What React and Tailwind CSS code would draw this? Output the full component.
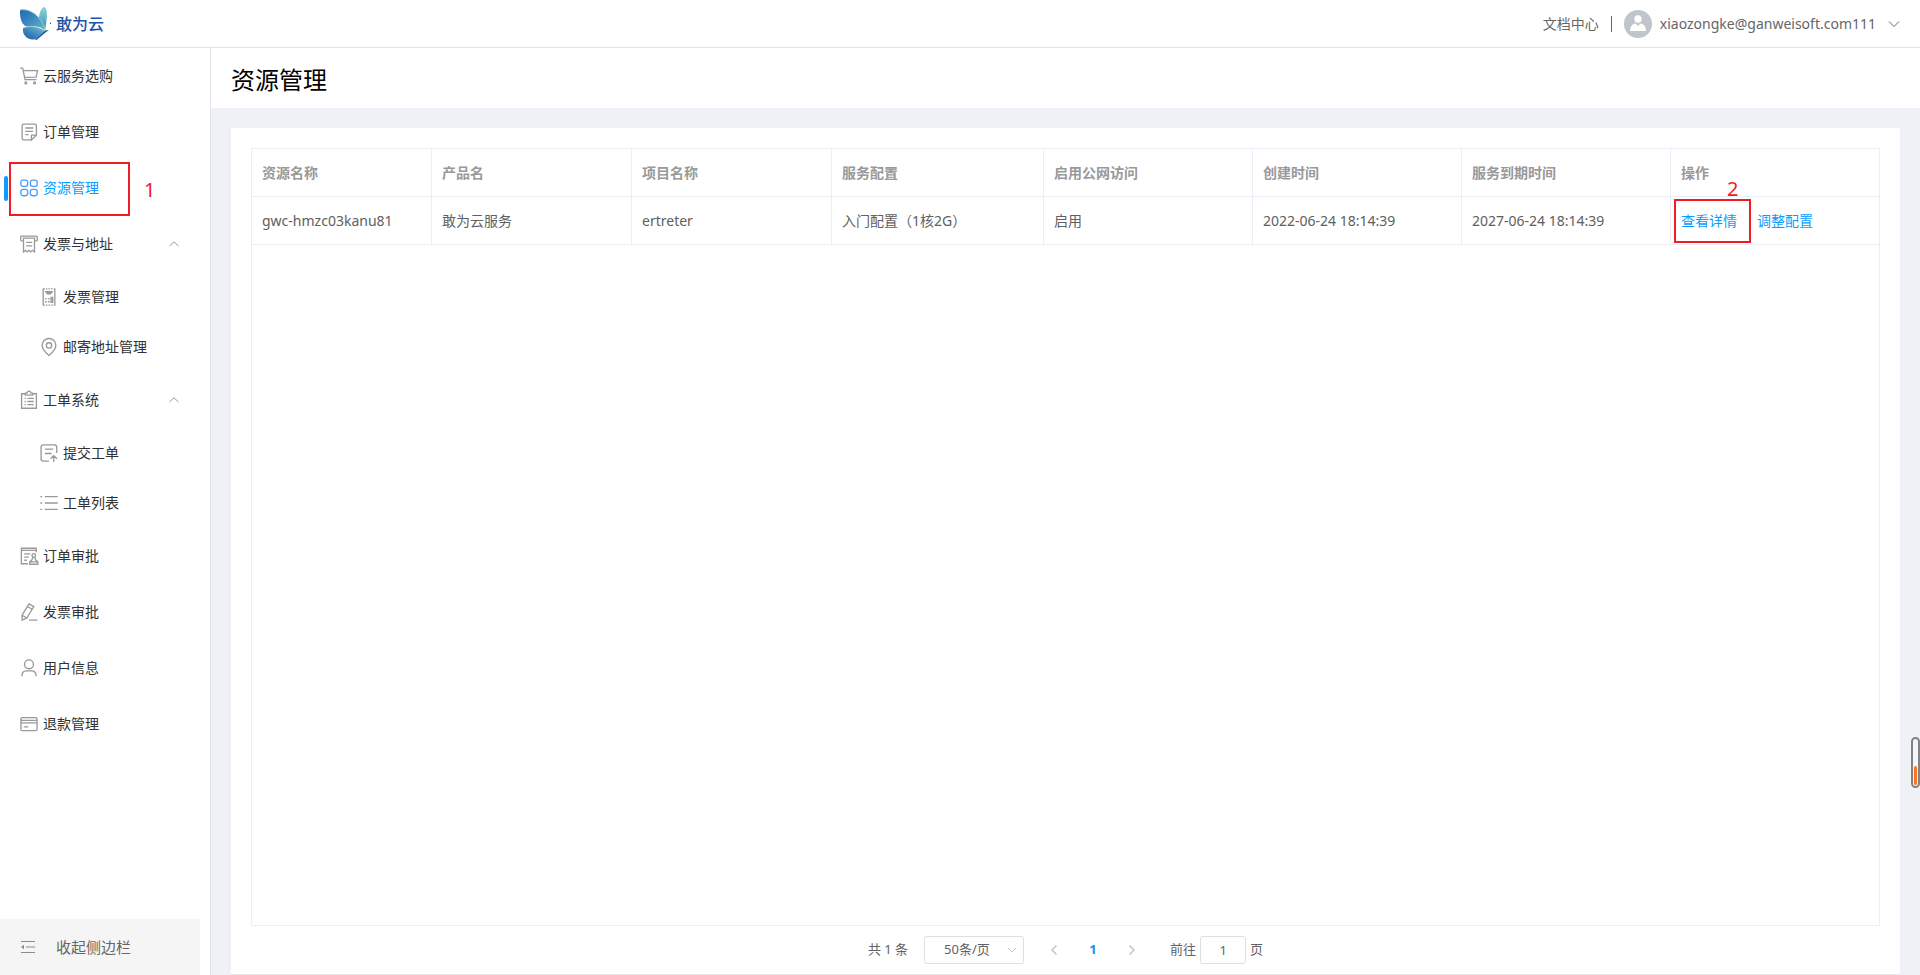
import { useState } from "react";
import clsx from "clsx";

const icons = {
  cart: (
    <>
      <path d="M.2 1h2.300l2.300 11h10.700M3 3.500h13.500l-1.300 6-10.800.3" />
      <circle cx="5.500" cy="15" r=".9" />
      <circle cx="13.800" cy="15" r=".9" />
    </>
  ),
  note: (
    <path d="M10.800 16H3.300c-.8 0-1.300-.5-1.300-1.300V2.300C2 1.500 2.500 1 3.300 1h10.900c.8 0 1.300.5 1.300 1.300v9.200L10.800 16v-4.500h4.500M5 4.700h7.500M5 7.900h7.500M5 11h3" />
  ),
  grid: (
    <>
      <rect x=".8" y="1" width="6.400" height="6" rx="2" />
      <rect x="9.800" y="1" width="6.400" height="6" rx="2" />
      <rect x=".8" y="9.800" width="6.400" height="6" rx="2" />
      <rect x="9.800" y="9.800" width="6.400" height="6" rx="2" />
    </>
  ),
  printer: (
    <path d="M3 5.500H1.500C1 5.500.7 5.200.7 4.700V1.800c0-.5.3-.8.8-.8h14c.5 0 .8.3.8.8v2.900c0 .5-.3.8-.8.8H14M2.800 3h11.600M3.300 3.500V16l2-1.500L7 16l1.600-1.500 1.500 1.500 1.700-1.500 1.900 1.500V3.500M5.800 7h5.700M5.800 10.300h5.700" />
  ),
  receipt: (
    <>
      <path d="M3 .5v16M14 .5v16" />
      <path d="M3 .9h11M3 16.200h11" strokeDasharray="1.500 1" />
      <path d="M5.500 3.500h6l-1.500 2h-3z" fill="currentColor" />
      <path d="M4.800 10.300h1.700M7.500 10.300h1.700M4.800 13h1.700M7.500 13h1.700" />
      <path d="M10.500 8.800H12v2.200h-1.500zM10.500 11.300H12v2.200h-1.500z" />
    </>
  ),
  pin: (
    <>
      <path d="M8.500 16.500C4.500 13 2 10.300 2 7a6.500 6.500 0 0 1 13 0c0 3.300-2.500 6-6.500 9.500z" />
      <circle cx="8.500" cy="7" r="2.500" />
    </>
  ),
  clipboard: (
    <>
      <path d="M5 2.600H1.500v13.700h14V2.600H12M5 3.900h7V2h-1.700a1.800 1.800 0 0 0-3.600 0H5z" />
      <path d="M4.300 7h1.200M7 7h6M4.300 9.900h1.200M7 9.900h6M4.300 12.800h1.200M7 12.800h6" />
    </>
  ),
  submit: (
    <path d="M15.800 8.500V3c0-1.500-.7-2.200-2.200-2.200H3.200C1.700.8 1 1.500 1 3v11c0 1.500.7 2.200 2.200 2.200h5.300M4.700 4.800h7.800M4.700 9h6.300M13 17v-5.800M10 14l3-3 3 3" />
  ),
  list: (
    <path d="M.3 2.500h1.700M4.500 2.500h12.300M.3 8.500h1.700M4.500 8.500h12.300M.3 14.500h1.700M4.500 14.500h12.300" />
  ),
  stamp: (
    <>
      <path d="M15.300 5V1.200H1.300v14.600h6.200M1.300 3.200h14M4 6.500h5.700M4 9.500h4.300M4 12.500h2.500" />
      <circle cx="13" cy="8" r="1.700" />
      <path d="M12.200 9.700 11 12.500l-1.800 1.300v2.500h7.600v-2.500L15 12.500l-1.200-2.800M9.200 14h7.600" />
    </>
  ),
  pencil: (
    <path d="M2 11.500 8.500.8l4.500 2.600L6.500 14.200 2 16.200zM7 3.300l4.500 2.600M2 11.600l4.500 2.600M8.500 16.200h8" />
  ),
  user: (
    <>
      <circle cx="8.500" cy="5" r="4.200" />
      <path d="M1.800 16.200c0-3.200 1.300-5 4.200-5h5c2.900 0 4.200 1.800 4.200 5" />
    </>
  ),
  card: (
    <path d="M2.100 2.500h12.800c.7 0 1.200.4 1.200 1.100v10c0 .7-.5 1.100-1.200 1.100H2.100c-.7 0-1.200-.4-1.200-1.100v-10c0-.7.5-1.100 1.200-1.100zM.9 5h15.200M.9 7.500h15.200M3.500 11.200h4.300" />
  ),
};

const menu = [
  { label: "云服务选购", icon: "cart" },
  { label: "订单管理", icon: "note" },
  { label: "资源管理", icon: "grid", active: true },
  {
    label: "发票与地址",
    icon: "printer",
    children: [
      { label: "发票管理", icon: "receipt" },
      { label: "邮寄地址管理", icon: "pin" },
    ],
  },
  {
    label: "工单系统",
    icon: "clipboard",
    children: [
      { label: "提交工单", icon: "submit" },
      { label: "工单列表", icon: "list" },
    ],
  },
  { label: "订单审批", icon: "stamp" },
  { label: "发票审批", icon: "pencil" },
  { label: "用户信息", icon: "user" },
  { label: "退款管理", icon: "card" },
];

const columns = [
  { title: "资源名称", width: "w-[180px]" },
  { title: "产品名", width: "w-[200px]" },
  { title: "项目名称", width: "w-[200px]" },
  { title: "服务配置", width: "w-[212px]" },
  { title: "启用公网访问", width: "w-[209px]" },
  { title: "创建时间", width: "w-[209px]" },
  { title: "服务到期时间", width: "w-[209px]" },
  { title: "操作" },
];

const rows = [
  [
    "gwc-hmzc03kanu81",
    "敢为云服务",
    "ertreter",
    "入门配置（1核2G）",
    "启用",
    "2022-06-24 18:14:39",
    "2027-06-24 18:14:39",
  ],
];

function MenuIcon({ name }) {
  return (
    <svg
      viewBox="0 0 17 17"
      className="h-[18px] w-[18px] shrink-0 overflow-visible"
      fill="none"
      stroke="currentColor"
      strokeWidth="1.250"
      aria-hidden="true"
    >
      {icons[name]}
    </svg>
  );
}

function Chevron({ d, className }) {
  return (
    <svg
      viewBox="0 0 12 12"
      className={clsx("h-3 w-3", className)}
      fill="none"
      stroke="currentColor"
      aria-hidden="true"
    >
      <path d={d} />
    </svg>
  );
}

function Logo() {
  return (
    <a href="#" className="flex items-center gap-1">
      <svg viewBox="0 0 32 36" className="h-9 w-8" aria-hidden="true">
        <defs>
          <linearGradient id="wingA" x1="0" y1="0" x2="1" y2="1">
            <stop offset="0" stopColor="#1f66b0" />
            <stop offset=".5" stopColor="#3f8fc4" />
            <stop offset="1" stopColor="#6dbccb" />
          </linearGradient>
          <linearGradient id="wingB" x1="0" y1="0" x2="0" y2="1">
            <stop offset="0" stopColor="#8bd3d6" />
            <stop offset="1" stopColor="#3b94bd" />
          </linearGradient>
          <linearGradient id="wingC" x1="1" y1="0" x2="0" y2="1">
            <stop offset="0" stopColor="#7fc4d4" />
            <stop offset=".6" stopColor="#3a80bd" />
            <stop offset="1" stopColor="#1d5ba4" />
          </linearGradient>
        </defs>
        <path
          d="M19 11c.5-5 2.500-9 5-10 2 .5 3 3.500 2.800 9-.2 5-.8 9-1.500 13L19 14z"
          fill="url(#wingB)"
        />
        <path
          d="M0 4c6-1.500 13 1.500 18 6.500 4.500 4.500 7 9.500 8 15.500-3-4.500-8-5.500-12.500-5.500-4.500 0-7.500.5-9.500-1.500C.5 15.500 0 10 0 4z"
          fill="url(#wingA)"
        />
        <path
          d="M3 22c5-2.500 14-2.500 22.500 3-3 3.500-7 8-12 8.500C7 34 2 28.500 3 22z"
          fill="url(#wingC)"
        />
        <path
          d="M0 4c7-1.500 14 2.500 18.500 7.500 3.500 4 6 8.500 7 13.500-6-4.500-15-6-22.500-3"
          fill="none"
          stroke="#a2dccc"
          strokeWidth=".8"
        />
        <path d="m15 34 10.500-9.500 3.500-.5-3.500 2.500-9 7.500z" fill="#195a9b" />
        <path d="M30 16.500h1v1.500h-1z" fill="#195a9b" />
      </svg>
      <span className="text-base font-medium text-[#1c57a5]">敢为云</span>
    </a>
  );
}

function MenuLink({ item, nested }) {
  return (
    <a
      href="#"
      className={clsx(
        "relative flex items-center gap-[5px] text-sm",
        nested ? "h-[50px] pl-10" : "h-14 pl-5",
        item.active ? "text-[#0b9cff]" : "text-[#303133]"
      )}
    >
      {item.active && (
        <span className="absolute top-4 left-1 h-[25px] w-1 rounded-sm bg-[#0b9cff]" />
      )}
      <span className={item.active ? "text-[#4a9df8]" : "text-[#999]"}>
        <MenuIcon name={item.icon} />
      </span>
      {item.label}
      {item.active && (
        <>
          <span className="absolute top-0.5 left-[9px] h-[54px] w-[121px] border-2 border-[#ee1c25]" />
          <span className="absolute top-4 left-36 text-xl leading-7 text-[#ee1c25]">
            1
          </span>
        </>
      )}
    </a>
  );
}

function MenuGroup({ item }) {
  const [open, setOpen] = useState(true);
  return (
    <div>
      <button
        type="button"
        aria-expanded={open}
        onClick={() => setOpen(!open)}
        className="flex h-14 w-full items-center gap-[5px] pr-[30px] pl-5 text-sm text-[#303133]"
      >
        <span className="text-[#999]">
          <MenuIcon name={item.icon} />
        </span>
        {item.label}
        <Chevron
          d="M1.500 8 6 3.800 10.500 8"
          className={clsx("ml-auto text-[#999]", !open && "rotate-180")}
        />
      </button>
      {open &&
        item.children.map((child) => (
          <MenuLink key={child.label} item={child} nested />
        ))}
    </div>
  );
}

function Sidebar() {
  return (
    <aside className="flex w-[211px] shrink-0 flex-col border-r border-[#e3e4e9] bg-white">
      <nav className="flex-1">
        {menu.map((item) =>
          item.children ? (
            <MenuGroup key={item.label} item={item} />
          ) : (
            <MenuLink key={item.label} item={item} />
          )
        )}
      </nav>
      <button
        type="button"
        className="mr-2.5 flex h-14 items-center gap-5 bg-[#f5f5f5] pl-5 text-[15px] text-[#666]"
      >
        <svg
          viewBox="0 0 16 14"
          className="h-3.5 w-4"
          fill="none"
          stroke="#8c8c8c"
          strokeWidth="1.200"
          aria-hidden="true"
        >
          <path d="M1 1.500h14M6 7h9M1 12.500h14" />
          <path d="M4 4.800v4.400L1 7z" fill="#8c8c8c" stroke="none" />
        </svg>
        收起侧边栏
      </button>
    </aside>
  );
}

function ResourceTable() {
  return (
    <table className="w-full table-fixed border-separate border-spacing-0 text-left text-sm">
      <thead>
        <tr>
          {columns.map((col) => (
            <th
              key={col.title}
              className={clsx(
                "h-12 border-r border-b border-[#ebeef5] px-2.5 font-bold text-[#999] last:border-r-0",
                col.width
              )}
            >
              {col.title}
            </th>
          ))}
        </tr>
      </thead>
      <tbody>
        {rows.map((row) => (
          <tr key={row[0]}>
            {row.map((cell) => (
              <td
                key={cell}
                className="h-12 border-r border-b border-[#ebeef5] px-2.5 whitespace-nowrap text-[#606060]"
              >
                {cell}
              </td>
            ))}
            <td className="relative h-12 border-b border-[#ebeef5] px-2.5 text-[#0b9cff]">
              <div className="flex gap-5">
                <a href="#">查看详情</a>
                <a href="#">调整配置</a>
              </div>
              <span className="absolute top-0.5 left-[3px] h-11 w-[77px] border-2 border-[#ee1c25]" />
              <span className="absolute -top-6 left-14 text-xl leading-8 text-[#ee1c25]">
                2
              </span>
            </td>
          </tr>
        ))}
      </tbody>
    </table>
  );
}

function Pagination() {
  const [page, setPage] = useState("1");
  return (
    <div className="flex h-12 items-center justify-center text-[13px] text-[#606266]">
      <span>共 1 条</span>
      <div className="relative ml-4">
        <select
          aria-label="每页条数"
          className="h-7 w-[100px] appearance-none rounded-[3px] border border-[#dcdfe6] bg-white pl-[19px]"
        >
          <option>50条/页</option>
        </select>
        <Chevron
          d="M2 4 6 8l4-4"
          className="pointer-events-none absolute top-2 right-1.5 text-[#c0c4cc]"
        />
      </div>
      <button type="button" aria-label="上一页" className="ml-6 text-[#c0c4cc]">
        <Chevron d="M8.500 1.500 4 6l4.500 4.500" className="stroke-[1.5]" />
      </button>
      <button type="button" className="mx-7 w-2.5 font-bold text-[#1890ff]">
        1
      </button>
      <button type="button" aria-label="下一页" className="text-[#c0c4cc]">
        <Chevron d="M3.500 1.500 8 6l-4.500 4.500" className="stroke-[1.5]" />
      </button>
      <label className="ml-8 flex items-center gap-1">
        前往
        <input
          value={page}
          onChange={(e) => setPage(e.target.value)}
          className="h-7 w-[46px] rounded-[3px] border border-[#dcdfe6] bg-white text-center"
        />
        页
      </label>
    </div>
  );
}

export default function App() {
  return (
    <div className="flex min-h-screen flex-col bg-[#f0f1f6] font-['Noto_Sans','Noto_Sans_CJK_SC',sans-serif]">
      <header className="flex h-12 items-center border-b border-[#e3e3e6] bg-white px-5 text-sm text-[#666]">
        <Logo />
        <a href="#" className="ml-auto">
          文档中心
        </a>
        <span className="mx-3 h-4 w-px bg-[#666]" />
        <button type="button" className="flex items-center gap-2">
          <svg viewBox="0 0 28 28" className="h-7 w-7" aria-hidden="true">
            <circle cx="14" cy="14" r="14" fill="#c0c4cc" />
            <circle cx="14" cy="9" r="3.700" fill="#fff" />
            <path
              d="M6 21c0-4 1.800-7 5.500-7.500L14 16l2.500-2.500C20.200 14 22 17 22 21z"
              fill="#fff"
            />
          </svg>
          xiaozongke@ganweisoft.com111
          <Chevron d="M1 3.500 6 8.500l5-5" className="ml-1" />
        </button>
      </header>
      <div className="flex flex-1">
        <Sidebar />
        <main className="flex min-w-0 flex-1 flex-col">
          <h1 className="flex h-[60px] items-center bg-white px-5 pt-1 text-2xl text-black">
            资源管理
          </h1>
          <section className="mx-5 mt-5 flex flex-1 flex-col border-b border-[#e6e8ee] bg-white px-5 pt-5">
            <div className="flex-1 border border-[#ebeef5]">
              <ResourceTable />
            </div>
            <Pagination />
          </section>
        </main>
      </div>
      <div className="fixed top-[737px] right-0 flex h-[51px] w-[9px] items-end rounded-full border-2 border-[#808286] bg-[#f5f5f7] p-px">
        <div className="h-[19px] w-full rounded-full bg-[#ff7420]" />
      </div>
    </div>
  );
}
